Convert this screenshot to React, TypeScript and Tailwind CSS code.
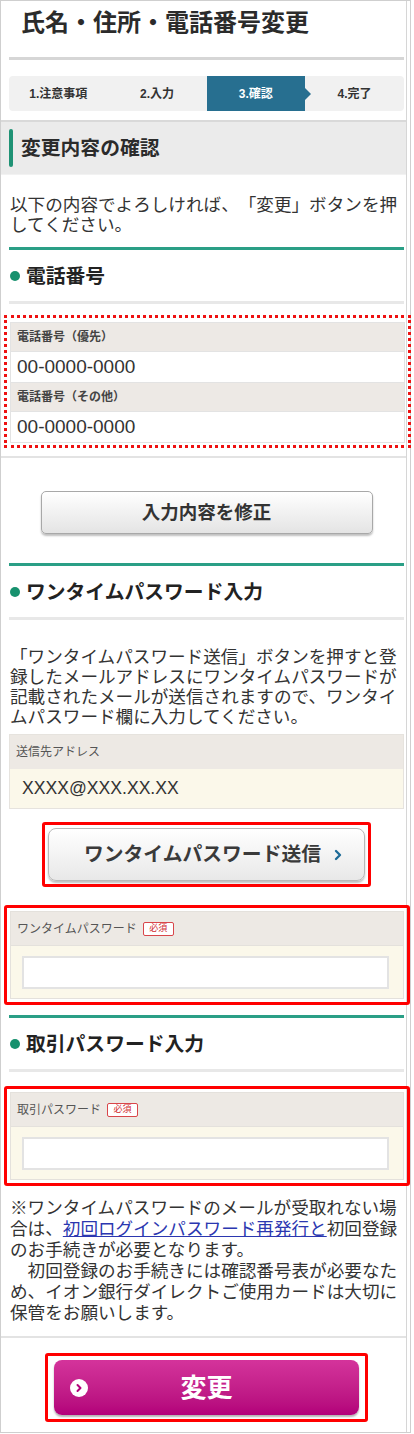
import { ChevronRight } from "lucide-react";

const Badge = () => (
  <span className="ml-[6px] inline-flex h-[14px] w-[31px] items-center justify-center rounded-[2px] border border-[#d9464a] bg-white text-[9px] leading-none text-[#d02c30]">
    必須
  </span>
);

const SectionTitle = ({ title }: { title: string }) => (
  <>
    <div className="h-[3px] bg-[#2a9f86]" />
    <div className="flex h-[51px] items-center pl-[1px]">
      <span className="h-[10px] w-[10px] rounded-full bg-[#17916e]" />
      <h3 className="ml-[6px] text-[19.8px] font-bold leading-[24px] text-[#222]">{title}</h3>
    </div>
    <div className="h-[3px] bg-[#e8e8e8]" />
  </>
);

const PasswordField = ({ label }: { label: string }) => (
  <div className="-ml-[5px] -mr-[6px] rounded-[3px] border-[3px] border-[#ff0000] p-[3px]">
    <div className="border border-[#e4e1dc]">
      <div className="flex h-[33px] items-center bg-[#ede9e4] pl-[6px] text-[12px] text-[#555]">
        {label}
        <Badge />
      </div>
      <div className="flex h-[53px] items-center border-t border-[#e4e1dc] bg-[#fbf8ea] pl-[11px]">
        <input
          type="password"
          className="h-[33px] w-[367px] border-2 border-[#e3e3e3] bg-white outline-none"
        />
      </div>
    </div>
  </div>
);

const steps = ["1.注意事項", "2.入力", "3.確認", "4.完了"];

export default function App() {
  return (
    <div className="w-[414px] bg-white font-['Liberation_Sans','Noto_Sans_CJK_JP',sans-serif] text-[#333] [text-spacing-trim:space-all]">
      <div className="flex w-[411px] border border-[#cfcfcf]">
        <div className="flex w-[406px] flex-col border-r border-[#d6d6d6] pb-[10px] pl-[8px] pr-[2px]">
          {/* title */}
          <div className="h-[56px] pl-[12px] pt-[10px]">
            <h1 className="text-[24px] font-bold leading-[24px] text-[#2b2b2b]">氏名・住所・電話番号変更</h1>
          </div>
          <div className="h-[3px] bg-[#d6d6d6]" />

          {/* steps */}
          <div className="mt-[16px] grid h-[35px] grid-cols-4 rounded-[4px] bg-[#f1f1f1] text-[12px]">
            {steps.map((s, i) =>
              i === 2 ? (
                <div key={s} className="relative flex items-center justify-center bg-[#276f90] font-bold text-white">
                  {s}
                  <span className="absolute left-full top-1/2 -translate-y-1/2 border-y-[6px] border-l-[6px] border-y-transparent border-l-[#276f90]" />
                </div>
              ) : (
                <div key={s} className="flex items-center justify-center font-bold text-[#333]">
                  {s}
                </div>
              )
            )}
          </div>

          {/* band */}
          <div className="-ml-[8px] -mr-[2px] mt-[9px] flex h-[55px] items-center border-t-2 border-b border-t-[#d9d9d9] border-b-[#f2f2f2] bg-[#ebebeb] pl-[8px]">
            <span className="h-[38px] w-[4px] rounded-full bg-[#1f9275]" />
            <h2 className="ml-[8px] text-[19.8px] font-bold leading-[24px] text-[#2b2b2b]">変更内容の確認</h2>
          </div>

          <p className="mt-[20px] pl-[1px] text-[17.6px] leading-[20px]">
            以下の内容でよろしければ、「変更」ボタンを押
            <br />
            してください。
          </p>

          <div className="mt-[12px]">
            <SectionTitle title="電話番号" />
          </div>

          {/* phone table */}
          <div className="-ml-[5px] -mr-[7px] mt-[11px] border-[3px] border-dotted border-[#ee1111] px-[3px] pb-[2px] pt-[4px]">
            <div className="border border-[#e3e3e3]">
              <div className="flex h-[28px] items-center bg-[#ede9e5] pl-[6px] text-[12px] font-bold text-[#444]">
                電話番号（優先）
              </div>
              <div className="flex h-[32px] items-center border-y border-[#e3e3e3] bg-white pl-[6px] text-[19px]">
                00-0000-0000
              </div>
              <div className="flex h-[28px] items-center bg-[#ede9e5] pl-[6px] text-[12px] font-bold text-[#444]">
                電話番号（その他）
              </div>
              <div className="flex h-[31px] items-center border-t border-[#e3e3e3] bg-white pl-[6px] text-[19px]">
                00-0000-0000
              </div>
            </div>
          </div>

          <div className="-ml-[8px] -mr-[2px] mt-[8px] h-[2px] bg-[#e3e3e3]" />

          <button
            type="button"
            className="mx-auto mt-[33px] h-[43px] w-[332px] rounded-[5px] border border-[#a8a8a8] bg-gradient-to-b from-white to-[#e4e4e4] text-[18.5px] font-bold text-[#333] shadow-[0_2px_2px_rgba(0,0,0,0.25)]"
          >
            入力内容を修正
          </button>

          <div className="mt-[29px]">
            <SectionTitle title="ワンタイムパスワード入力" />
          </div>

          <p className="mt-[27px] pl-[1px] text-[17.6px] leading-[20px]">
            「ワンタイムパスワード送信」ボタンを押すと登
            <br />
            録したメールアドレスにワンタイムパスワードが
            <br />
            記載されたメールが送信されますので、ワンタイ
            <br />
            ムパスワード欄に入力してください。
          </p>

          {/* address */}
          <div className="mt-[7px] border border-[#e6e3de]">
            <div className="flex h-[34px] items-center bg-[#ede9e4] pl-[6px] text-[12px] text-[#555]">送信先アドレス</div>
            <div className="flex h-[39px] items-center bg-[#fbf8ea] pl-[12px] text-[17.6px]">XXXX@XXX.XX.XX</div>
          </div>

          <div className="mx-auto mt-[13px] w-[329px] rounded-[3px] border-[3px] border-[#ff0000] px-[3px] py-[3px]">
            <button
              type="button"
              className="flex h-[53px] w-full items-center justify-center gap-[9px] rounded-[8px] border border-[#b8b8b8] bg-gradient-to-b from-white to-[#e8e8e8] pl-[17px] text-[19.8px] font-bold text-[#3a3a3a] shadow-[0_2px_2px_rgba(0,0,0,0.25)]"
            >
              ワンタイムパスワード送信
              <ChevronRight size={16} strokeWidth={3.5} className="text-[#1d6b98]" />
            </button>
          </div>

          <div className="mt-[18px]">
            <PasswordField label="ワンタイムパスワード" />
          </div>

          <div className="mt-[10px]">
            <SectionTitle title="取引パスワード入力" />
          </div>

          <div className="mt-[14px]">
            <PasswordField label="取引パスワード" />
          </div>

          <p className="mt-[12px] pl-[1px] text-[17.6px] leading-[21px]">
            ※ワンタイムパスワードのメールが受取れない場
            <br />
            合は、
            <a href="#" className="text-[#2b37b0] underline">
              初回ログインパスワード再発行と
            </a>
            初回登録
            <br />
            のお手続きが必要となります。
            <br />
            {"\u3000"}初回登録のお手続きには確認番号表が必要なた
            <br />
            め、イオン銀行ダイレクトご使用カードは大切に
            <br />
            保管をお願いします。
          </p>

          <div className="-ml-[8px] -mr-[2px] mt-[12px] h-[2px] bg-[#e3e3e3]" />

          <div className="mx-auto mt-[15px] w-[323px] rounded-[3px] border-[3px] border-[#ff0000] px-[6px] py-[4px]">
            <button
              type="button"
              className="grid h-[55px] w-full grid-cols-[1fr_auto_1fr] items-center rounded-[8px] bg-gradient-to-b from-[#d4339b] to-[#b3007a] text-white shadow-[0_2px_2px_rgba(0,0,0,0.3)]"
            >
              <span className="flex pl-[16px]">
                <span className="flex h-[18px] w-[18px] items-center justify-center rounded-full bg-white">
                  <ChevronRight size={12} strokeWidth={4} className="text-[#b3007a]" />
                </span>
              </span>
              <span className="text-[26px] font-bold leading-none">変更</span>
              <span />
            </button>
          </div>
        </div>
        <div className="w-[3px]" />
      </div>
    </div>
  );
}
